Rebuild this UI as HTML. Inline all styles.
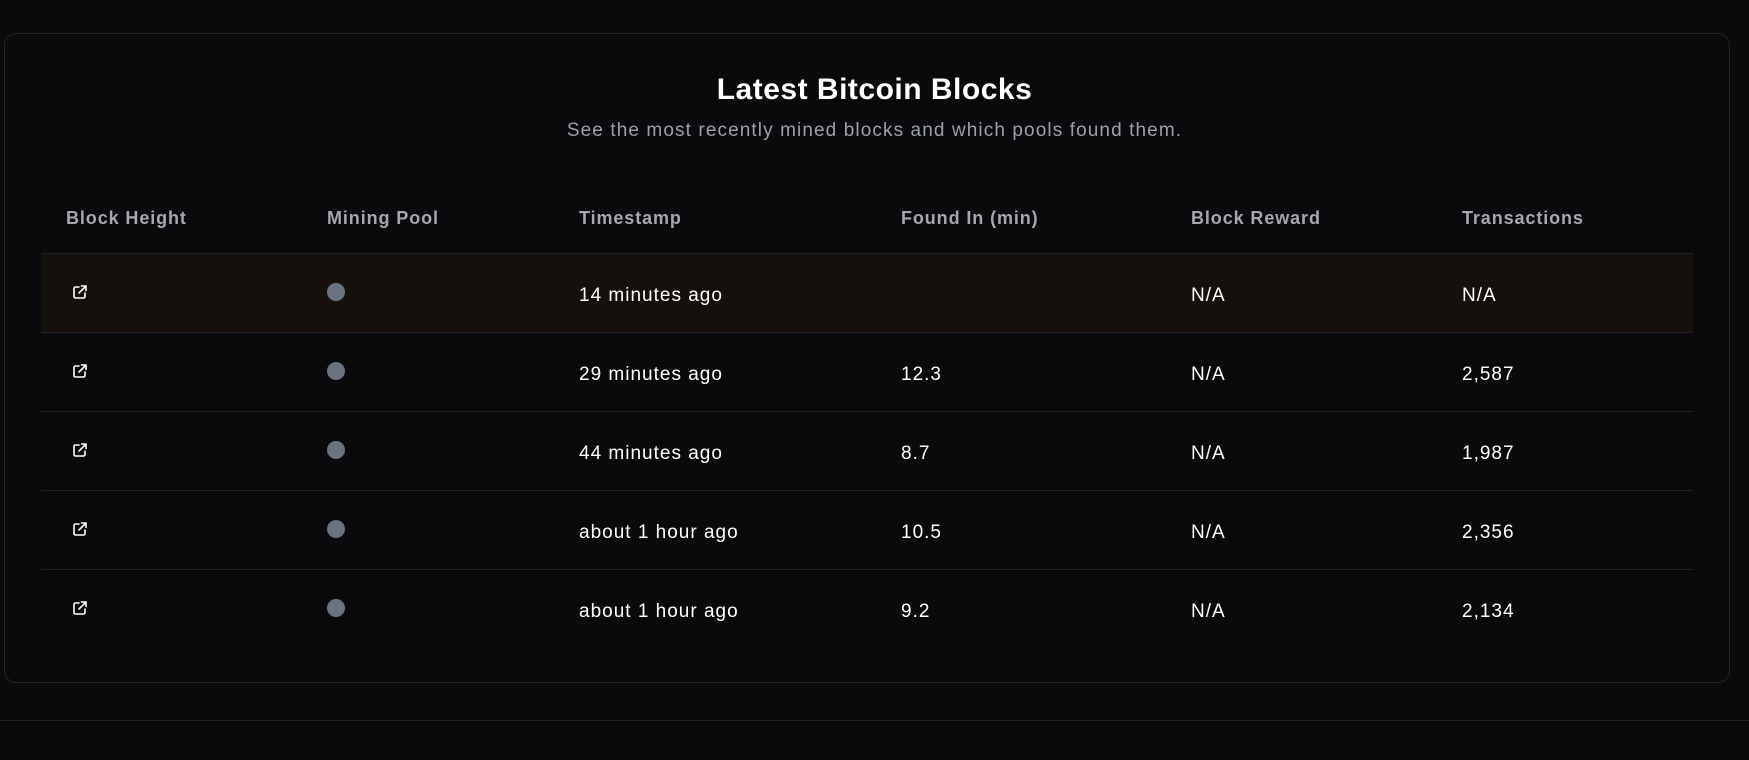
<!DOCTYPE html>
<html><head><meta charset="utf-8"><style>
*{margin:0;padding:0;box-sizing:border-box}
html,body{width:1749px;height:760px;background:#0a0a0c;overflow:hidden;font-family:"Liberation Sans",sans-serif;color:#fff}
.card{position:absolute;left:4px;top:33px;width:1726px;height:650px;border:1px solid #242428;border-radius:12px;background:#0a0a0c}
h1{position:absolute;left:0;right:0;top:73px;text-align:center;font-size:30px;font-weight:bold;color:#fff;letter-spacing:0.5px}
.sub{position:absolute;left:0;right:0;top:120px;text-align:center;font-size:19px;color:#9ca0a8;letter-spacing:1.1px}
.hdr{position:absolute;top:208px;font-size:18px;color:#a5a8ae;font-weight:bold;letter-spacing:0.9px}
.row{position:absolute;left:41px;width:1652px;height:79px;border-top:1px solid #222226}
.row.first{background:#15100c}
.cell{position:absolute;top:285px;font-size:19px;color:#fff;letter-spacing:1px}
.dot{position:absolute;width:18px;height:18px;border-radius:50%;background:#6b7280}
.bottom{position:absolute;left:0;top:720px;width:1749px;height:1px;background:#222226}
</style></head><body>
<div class="card"></div>
<h1>Latest Bitcoin Blocks</h1>
<div class="sub">See the most recently mined blocks and which pools found them.</div>
<div class="hdr" style="left:66px">Block Height</div>
<div class="hdr" style="left:327px">Mining Pool</div>
<div class="hdr" style="left:579px">Timestamp</div>
<div class="hdr" style="left:901px">Found In (min)</div>
<div class="hdr" style="left:1191px">Block Reward</div>
<div class="hdr" style="left:1462px">Transactions</div>

<div class="row first" style="top:253px"></div>
<div class="row" style="top:332px"></div>
<div class="row" style="top:411px"></div>
<div class="row" style="top:490px"></div>
<div class="row" style="top:569px"></div>

<svg width="0" height="0" style="position:absolute"><defs><g id="ic"><path d="M7 3H3.5A1.5 1.5 0 0 0 2 4.5v8A1.5 1.5 0 0 0 3.5 14h8a1.5 1.5 0 0 0 1.5-1.5V9" fill="none" stroke="#fff" stroke-width="1.6" stroke-linecap="round"/><path d="M7 9L14 2M9.5 2H14v4.5" fill="none" stroke="#fff" stroke-width="1.6" stroke-linecap="round" stroke-linejoin="round"/></g></defs></svg>

<svg style="position:absolute;left:72px;top:284px" width="16" height="16"><use href="#ic"/></svg>
<svg style="position:absolute;left:72px;top:363px" width="16" height="16"><use href="#ic"/></svg>
<svg style="position:absolute;left:72px;top:442px" width="16" height="16"><use href="#ic"/></svg>
<svg style="position:absolute;left:72px;top:521px" width="16" height="16"><use href="#ic"/></svg>
<svg style="position:absolute;left:72px;top:600px" width="16" height="16"><use href="#ic"/></svg>

<div class="dot" style="left:327px;top:283px"></div>
<div class="dot" style="left:327px;top:362px"></div>
<div class="dot" style="left:327px;top:441px"></div>
<div class="dot" style="left:327px;top:520px"></div>
<div class="dot" style="left:327px;top:599px"></div>

<div class="cell" style="left:579px;top:285px">14 minutes ago</div>
<div class="cell" style="left:1191px;top:285px">N/A</div>
<div class="cell" style="left:1462px;top:285px">N/A</div>

<div class="cell" style="left:579px;top:364px">29 minutes ago</div>
<div class="cell" style="left:901px;top:364px">12.3</div>
<div class="cell" style="left:1191px;top:364px">N/A</div>
<div class="cell" style="left:1462px;top:364px">2,587</div>

<div class="cell" style="left:579px;top:443px">44 minutes ago</div>
<div class="cell" style="left:901px;top:443px">8.7</div>
<div class="cell" style="left:1191px;top:443px">N/A</div>
<div class="cell" style="left:1462px;top:443px">1,987</div>

<div class="cell" style="left:579px;top:522px">about 1 hour ago</div>
<div class="cell" style="left:901px;top:522px">10.5</div>
<div class="cell" style="left:1191px;top:522px">N/A</div>
<div class="cell" style="left:1462px;top:522px">2,356</div>

<div class="cell" style="left:579px;top:601px">about 1 hour ago</div>
<div class="cell" style="left:901px;top:601px">9.2</div>
<div class="cell" style="left:1191px;top:601px">N/A</div>
<div class="cell" style="left:1462px;top:601px">2,134</div>

<div class="bottom"></div>
</body></html>
